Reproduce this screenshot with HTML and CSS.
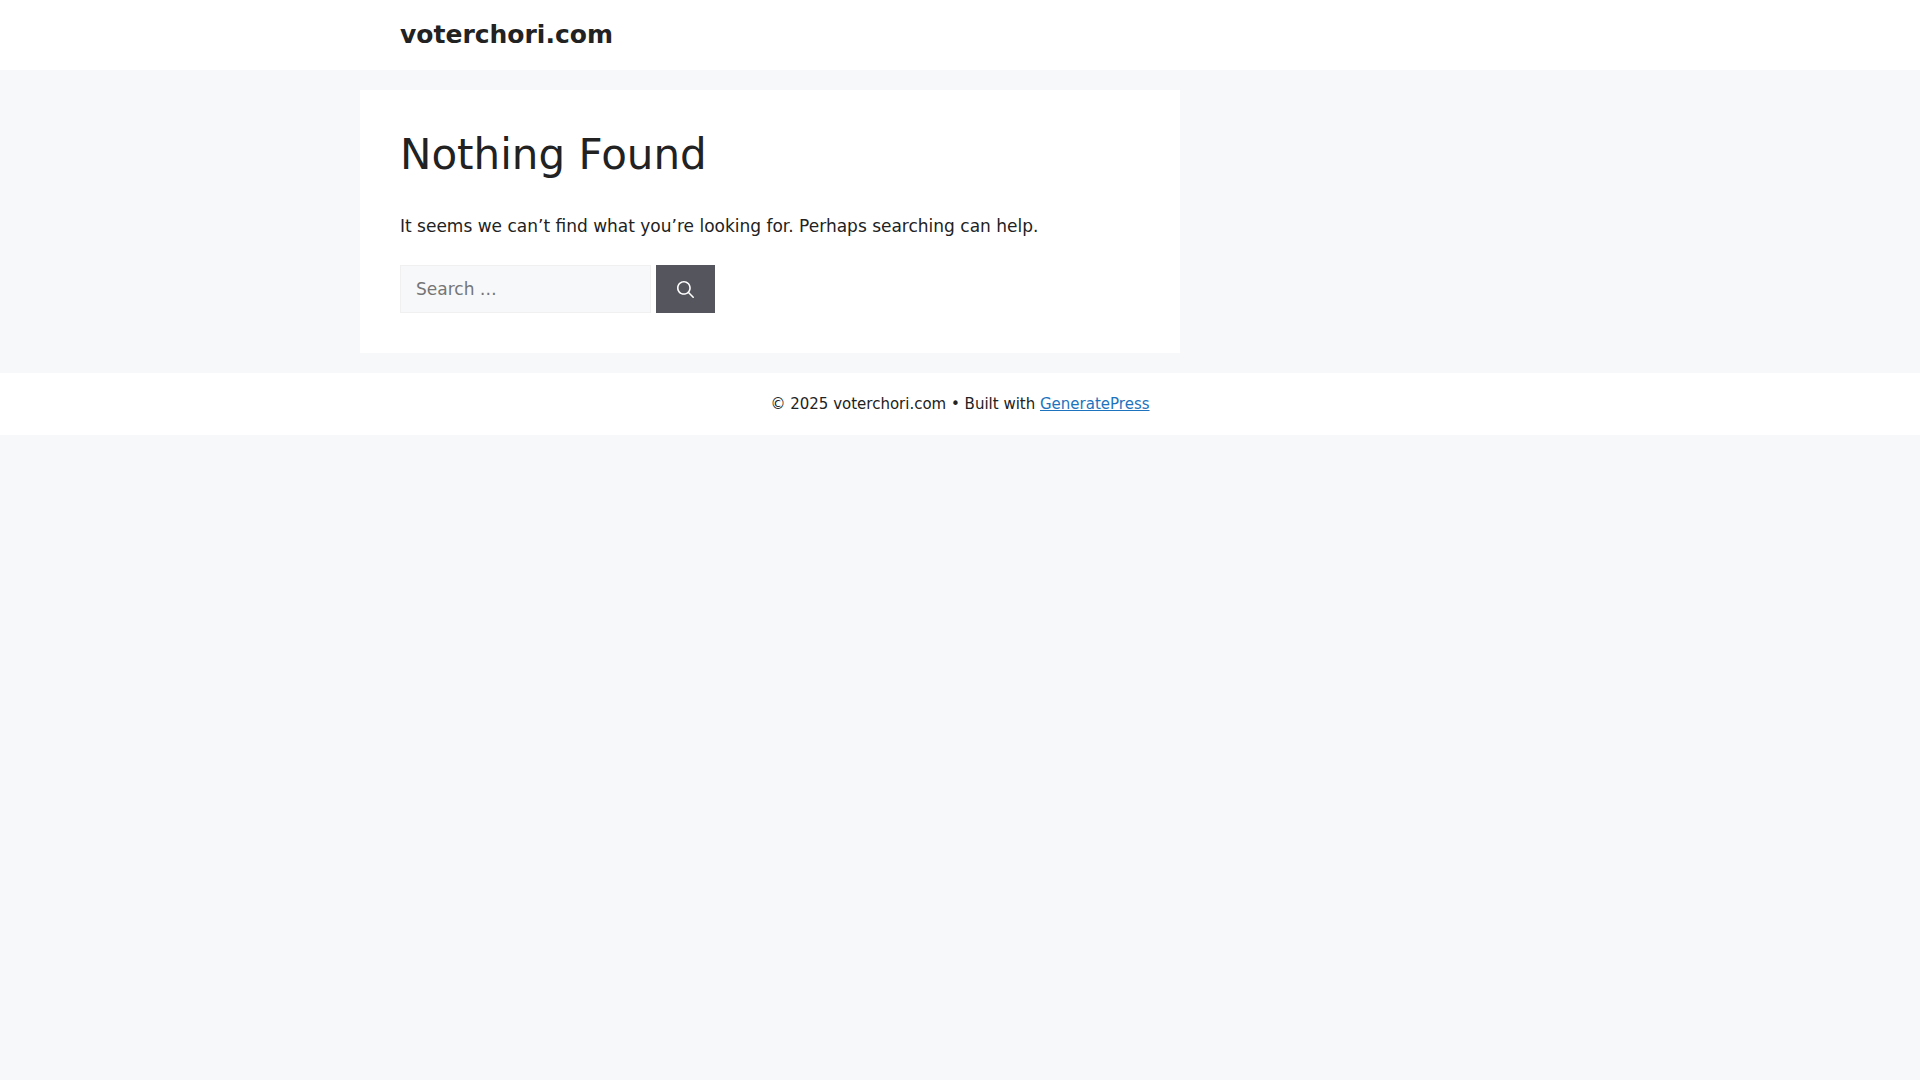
FILE: index.html
```html
<!DOCTYPE html>
<html lang="en-US">
<head>
<meta charset="UTF-8">
<meta name="viewport" content="width=device-width, initial-scale=1">
<title>voterchori.com</title>
<link rel="stylesheet" href="styles.css">
</head>
<body>
<header class="site-header">
  <div class="inside-header">
    <p class="site-title"><a href="#">voterchori.com</a></p>
  </div>
</header>
<div class="site-content">
  <main class="content-area">
    <section class="inside-article">
      <h1 class="entry-title">Nothing Found</h1>
      <p class="entry-text">It seems we can’t find what you’re looking for. Perhaps searching can help.</p>
      <form class="search-form" role="search">
        <input class="search-field" type="search" placeholder="Search …" aria-label="Search for:">
        <button class="search-submit" type="submit" aria-label="Search">
          <svg class="search-icon" viewBox="0 0 512 512" aria-hidden="true"><path fill-rule="evenodd" clip-rule="evenodd" d="M208 48c-88.366 0-160 71.634-160 160s71.634 160 160 160 160-71.634 160-160S296.366 48 208 48zM0 208C0 93.125 93.125 0 208 0s208 93.125 208 208c0 48.741-16.765 93.566-44.843 129.024l133.826 134.018c9.366 9.379 9.355 24.575-.025 33.941-9.379 9.366-24.575 9.355-33.941-.025L337.238 370.987C301.747 399.167 256.839 416 208 416 93.125 416 0 322.875 0 208z"/></svg>
        </button>
      </form>
    </section>
  </main>
</div>
<footer class="site-info">
  <p class="copyright">© 2025 voterchori.com • Built with <a href="#">GeneratePress</a></p>
</footer>
</body>
</html>
```
FILE: styles.css
```css
* {
  box-sizing: border-box;
}

body {
  margin: 0;
  background: #f7f8f9;
  color: #222222;
  font-family: "DejaVu Sans", sans-serif;
  font-size: 17px;
  line-height: 26px;
}

h1,
p {
  margin: 0;
}

.site-header,
.site-info {
  background: #ffffff;
}

.inside-header {
  max-width: 1200px;
  margin: 0 auto;
  padding: 20px 40px;
}

.site-title {
  font-size: 25px;
  font-weight: 700;
  line-height: 30px;
}

.site-title a {
  color: #222222;
  text-decoration: none;
}

.site-content {
  max-width: 1200px;
  margin: 0 auto;
  padding: 20px 0;
}

.content-area {
  width: 70%;
  min-width: 320px;
}

.inside-article {
  display: flow-root;
  padding: 40px;
  margin-right: 20px;
  background: #ffffff;
}

.entry-title {
  font-size: 42px;
  font-weight: 400;
  line-height: 50px;
}

.entry-text {
  margin: 33px 0 26px;
}

.search-form {
  display: flex;
  gap: 5px;
}

.search-field {
  width: 251px;
  height: 48px;
  padding: 10px 15px;
  border: 1px solid #f0f0f0;
  border-radius: 0;
  background: #f7f8f9;
  color: #222222;
  font: inherit;
  appearance: none;
}

.search-field::placeholder {
  color: #757575;
}

.search-submit {
  display: flex;
  align-items: center;
  justify-content: center;
  width: 59px;
  padding: 0;
  border: 0;
  background: #55555e;
  color: #ffffff;
}

.search-icon {
  width: 17px;
  height: 17px;
  fill: currentColor;
}

.copyright {
  padding: 20px 40px;
  font-size: 15px;
  line-height: 22px;
  text-align: center;
}

.copyright a {
  color: #1e73be;
}
```
